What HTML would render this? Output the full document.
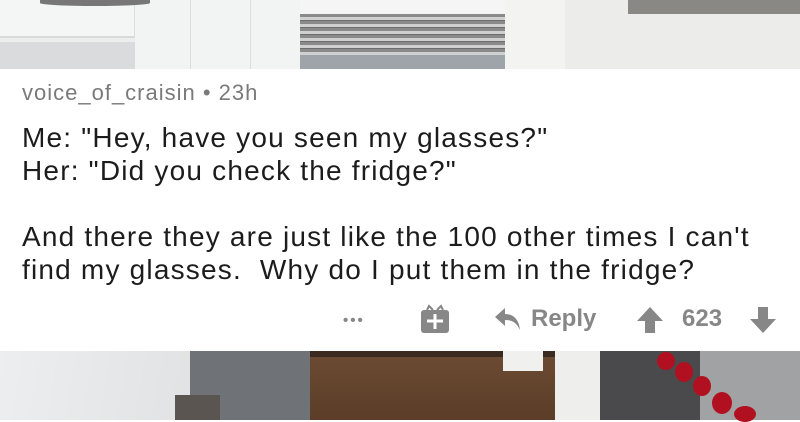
<!DOCTYPE html>
<html><head><style>
*{margin:0;padding:0;box-sizing:border-box}
body{width:800px;height:420px;overflow:hidden;position:relative;background:#fff;font-family:"Liberation Sans",sans-serif}
.a{position:absolute}
.t{font-size:28px;letter-spacing:1.2px;color:#1c1c1c;left:22px;line-height:33px;white-space:nowrap}
</style></head><body>
<!-- top image -->
<div class="a" style="left:0;top:0;width:800px;height:69px;background:#eceeee"></div>
<div class="a" style="left:0;top:0;width:135px;height:38px;background:#f4f5f5;border-right:1px solid #ddd;border-bottom:2px solid #d8dada"></div>
<div class="a" style="left:0;top:42px;width:135px;height:27px;background:#d9dbdc"></div>
<div class="a" style="left:135px;top:0;width:165px;height:69px;background:#f2f3f3"></div>
<div class="a" style="left:190px;top:0;width:1px;height:69px;background:#ddd"></div>
<div class="a" style="left:250px;top:0;width:1px;height:69px;background:#ddd"></div>
<div class="a" style="left:300px;top:0;width:205px;height:14px;background:#f5f5f5"></div>
<div class="a" style="left:300px;top:14px;width:205px;height:41px;background:repeating-linear-gradient(#8a8a8a 0 3px,#d0d0d0 3px 6px,#6e6e6e 6px 7px)"></div>
<div class="a" style="left:300px;top:55px;width:205px;height:14px;background:#9ea4aa"></div>
<div class="a" style="left:505px;top:0;width:60px;height:69px;background:#f3f3f2"></div>
<div class="a" style="left:565px;top:0;width:235px;height:69px;background:#ececea"></div>
<div class="a" style="left:628px;top:0;width:172px;height:14px;background:#8a8884"></div>
<div class="a" style="left:40px;top:0;width:110px;height:6px;background:#777;border-radius:0 0 50% 50%"></div>
<!-- panel text -->
<div class="a" style="left:22px;top:80px;font-size:22px;letter-spacing:1px;color:#7a7a7a;white-space:nowrap">voice_of_craisin • 23h</div>
<div class="a t" style="top:121px">Me: "Hey, have you seen my glasses?"<br>Her: "Did you check the fridge?"</div>
<div class="a t" style="top:220px">And there they are just like the 100 other times I can't<br>find my glasses.&nbsp; Why do I put them in the fridge?</div>
<!-- actions -->
<div class="a" style="left:343px;top:312px;font-size:15px;color:#888;letter-spacing:2px;font-weight:bold">•••</div>
<svg class="a" style="left:420px;top:304px" width="30" height="30" viewBox="0 0 30 30"><rect x="1" y="6" width="28" height="23" rx="3" fill="#878787"/><path d="M7 6 L9 2 L13 6 M17 6 L21 2 L23 6" stroke="#878787" stroke-width="2" fill="none"/><path d="M15 10v15M7 17h16" stroke="#fff" stroke-width="3"/></svg>
<svg class="a" style="left:494px;top:306px" width="28" height="26" viewBox="0 0 28 26"><path d="M11 2 L1 11 L11 20 L11 14 C18 14 22 16 26 24 C25 14 20 8 11 8 Z" fill="#878787"/></svg>
<div class="a" style="left:531px;top:305px;font-size:24px;color:#878787;font-weight:bold">Reply</div>
<svg class="a" style="left:636px;top:306px" width="28" height="28" viewBox="0 0 28 28"><path d="M14 1 L27 15 L19 15 L19 27 L9 27 L9 15 L1 15 Z" fill="#878787"/></svg>
<div class="a" style="left:682px;top:305px;font-size:24px;color:#878787;font-weight:bold">623</div>
<svg class="a" style="left:749px;top:306px" width="28" height="28" viewBox="0 0 28 28"><path d="M14 27 L27 13 L19 13 L19 1 L9 1 L9 13 L1 13 Z" fill="#878787"/></svg>
<!-- bottom image -->
<div class="a" style="left:0;top:351px;width:800px;height:69px;background:#5a3b26"></div>
<div class="a" style="left:0;top:351px;width:215px;height:69px;background:linear-gradient(100deg,#eceeef,#dfe1e2)"></div>
<div class="a" style="left:190px;top:351px;width:120px;height:69px;background:#6f7276"></div>
<div class="a" style="left:175px;top:395px;width:45px;height:25px;background:#5a5550"></div>
<div class="a" style="left:310px;top:351px;width:245px;height:69px;background:linear-gradient(#3a2a20 0 6px,#6a4a32 6px,#5b3d28)"></div>
<div class="a" style="left:503px;top:351px;width:40px;height:20px;background:#f0f0ee"></div>
<div class="a" style="left:555px;top:351px;width:45px;height:69px;background:#eeeeec"></div>
<div class="a" style="left:600px;top:351px;width:200px;height:69px;background:#4a4a4c"></div>
<div class="a" style="left:700px;top:351px;width:100px;height:69px;background:#a0a2a4"></div>
<div class="a" style="left:657px;top:352px;width:18px;height:18px;border-radius:50%;background:#b01020"></div>
<div class="a" style="left:675px;top:362px;width:18px;height:20px;border-radius:50%;background:#b01020"></div>
<div class="a" style="left:693px;top:376px;width:18px;height:20px;border-radius:50%;background:#b01020"></div>
<div class="a" style="left:712px;top:392px;width:20px;height:22px;border-radius:50%;background:#b01020"></div>
<div class="a" style="left:734px;top:406px;width:22px;height:16px;border-radius:50%;background:#b01020"></div>
</body></html>
